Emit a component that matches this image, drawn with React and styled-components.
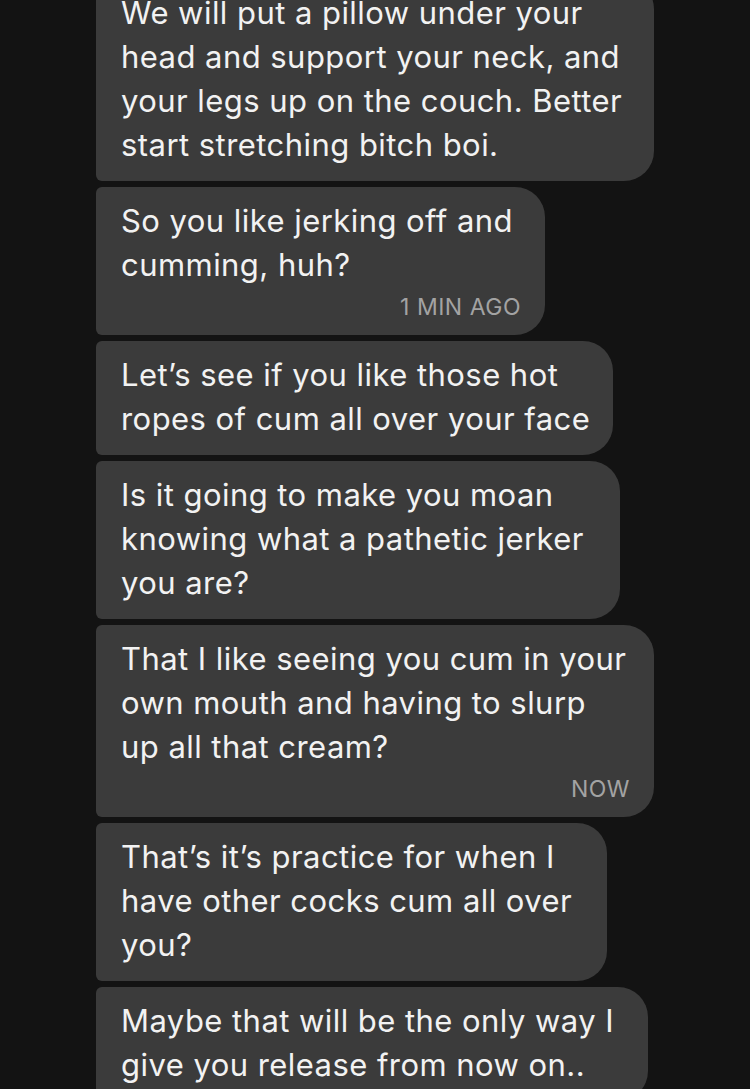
import React from 'react';
import styled, { createGlobalStyle } from 'styled-components';

const GlobalStyle = createGlobalStyle`
  html, body {
    margin: 0;
    padding: 0;
    background: #131313;
  }
  body {
    font-family: Inter, "Noto Sans", "Liberation Sans", sans-serif;
    -webkit-font-smoothing: antialiased;
  }
`;

const Screen = styled.div`
  width: 750px;
  height: 1089px;
  overflow: hidden;
  background: #131313;
`;

const Thread = styled.div`
  display: flex;
  flex-direction: column;
  align-items: flex-start;
  gap: 6px;
  margin-top: -21px;
  padding-left: 96px;
`;

const Bubble = styled.div`
  box-sizing: border-box;
  width: ${({ $w }) => $w}px;
  background: #3b3b3b;
  border-radius: 6px 30px 30px 6px;
  padding: 12px 24px 14px 25px;
  display: flex;
  flex-direction: column;
`;

const Text = styled.div`
  color: #f2f2f2;
  font-size: 31px;
  line-height: 44px;
  letter-spacing: 0.45px;
  white-space: nowrap;
`;

const Stamp = styled.div`
  align-self: flex-end;
  margin-top: 6px;
  color: #a3a3a3;
  font-size: 23px;
  line-height: 28px;
  letter-spacing: 0.5px;
`;

const messages = [
  {
    w: 558,
    lines: [
      'We will put a pillow under your',
      'head and support your neck, and',
      'your legs up on the couch. Better',
      'start stretching bitch boi.',
    ],
  },
  {
    w: 449,
    lines: ['So you like jerking off and', 'cumming, huh?'],
    stamp: '1 MIN AGO',
  },
  {
    w: 517,
    lines: ['Let\u2019s see if you like those hot', 'ropes of cum all over your face'],
  },
  {
    w: 524,
    lines: ['Is it going to make you moan', 'knowing what a pathetic jerker', 'you are?'],
  },
  {
    w: 558,
    lines: [
      'That I like seeing you cum in your',
      'own mouth and having to slurp',
      'up all that cream?',
    ],
    stamp: 'NOW',
  },
  {
    w: 511,
    lines: ['That\u2019s it\u2019s practice for when I', 'have other cocks cum all over', 'you?'],
  },
  {
    w: 552,
    lines: ['Maybe that will be the only way I', 'give you release from now on..'],
  },
];

const App = () => (
  <Screen>
    <GlobalStyle />
    <Thread>
      {messages.map((m, i) => (
        <Bubble key={i} $w={m.w}>
          {m.lines.map((l, j) => (
            <Text key={j}>{l}</Text>
          ))}
          {m.stamp && <Stamp>{m.stamp}</Stamp>}
        </Bubble>
      ))}
    </Thread>
  </Screen>
);

export default App;
